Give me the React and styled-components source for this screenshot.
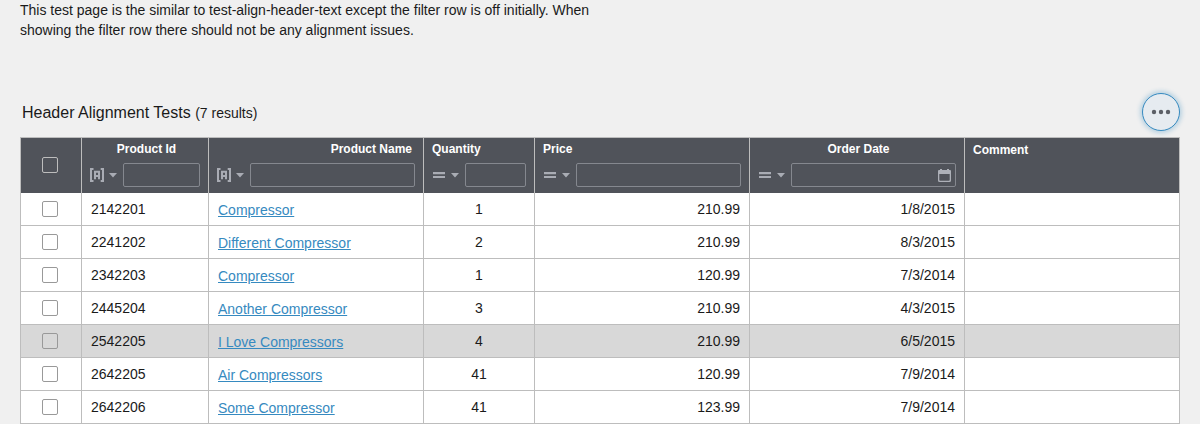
import React from 'react';
import styled, { createGlobalStyle } from 'styled-components';

const GlobalStyle = createGlobalStyle`
  *, *::before, *::after { box-sizing: border-box; }
  body {
    margin: 0;
    background: #f0f0f0;
    color: #1a1a1a;
    font: 14px/20px "Liberation Sans", Arial, sans-serif;
    overflow: hidden;
  }
`;

const Page = styled.main`
  padding: 0 20px;
  height: 424px;
  overflow: hidden;
`;

const Intro = styled.p`
  margin: 0;
  width: 580px;
  height: 93px;
`;

const Toolbar = styled.header`
  display: flex;
  justify-content: space-between;
  align-items: center;
  height: 38px;
  margin-bottom: 6px;
  padding-left: 2px;
`;

const Title = styled.h1`
  margin: 2px 0 0;
  font-size: 16px;
  font-weight: 400;
`;

const Count = styled.span`
  font-size: 14px;
`;

const MoreButton = styled.button`
  display: flex;
  align-items: center;
  justify-content: center;
  width: 38px;
  height: 38px;
  padding: 0;
  border: 1px solid #368ac0;
  border-radius: 50%;
  background: #e6ebf0;
  box-shadow: 0 0 4px 2px rgba(54, 138, 192, 0.3);
`;

const DotsSvg = styled.svg`
  width: 20px;
  height: 6px;
  fill: #5c5f66;
`;

const Grid = styled.div`
  border: solid #bdbdbd;
  border-width: 1px 0 0 1px;
`;

const columns = '61px 127px 215px 111px 215px 215px 215px';

const HeaderRow = styled.div`
  display: grid;
  grid-template-columns: ${columns};
  height: 55px;
  background: #50535a;
`;

const HeaderCell = styled.div`
  display: flex;
  flex-direction: column;
  padding: ${(p) => (p.$plain ? '5px' : '4px')} 8px 0;
  border-right: 1px solid #bdbdbd;
`;

const HeaderCheck = styled(HeaderCell)`
  align-items: center;
  padding: 19px 2px 0 0;
`;

const headerPadding = { left: '0', center: '0 0 0 3px', right: '0 3px 0 0' };

const HeaderText = styled.div`
  height: 14px;
  padding: ${(p) => headerPadding[p.$align]};
  color: #fff;
  font-size: 12px;
  font-weight: 700;
  line-height: 14px;
  text-align: ${(p) => p.$align};
  white-space: nowrap;
`;

const Filter = styled.div`
  display: flex;
  align-items: center;
  height: 24px;
  margin-top: 7px;
`;

const Operator = styled.svg`
  flex: none;
  width: 33px;
  height: 24px;
  color: #a9acb4;
`;

const FilterField = styled.div`
  display: flex;
  align-items: center;
  justify-content: flex-end;
  flex: 1;
  height: 24px;
  padding-right: 4px;
  border: 1px solid #85888f;
  border-radius: 2px;
`;

const CalendarSvg = styled.svg`
  width: 13px;
  height: 13px;
  margin-top: 1px;
  color: #adb0b8;
`;

const Row = styled.div`
  display: grid;
  grid-template-columns: ${columns};
  height: 33px;
  background: ${(p) => (p.$active ? '#d8d8d8' : '#fff')};
`;

const Cell = styled.div`
  height: 33px;
  padding: 0 9px;
  border: solid #bdbdbd;
  border-width: 0 1px 1px 0;
  line-height: 32px;
  text-align: ${(p) => p.$align || 'left'};
  white-space: nowrap;
`;

const CheckCell = styled(Cell)`
  display: flex;
  justify-content: center;
  padding: 8px 2px 0 0;
`;

const Checkbox = styled.span`
  width: 16px;
  height: 16px;
  border: 1px solid ${(p) => (p.$light ? '#bdbdbd' : '#999')};
  border-radius: 2px;
`;

const Link = styled.a`
  display: block;
  color: #368ac0;
  line-height: 34px;
  text-decoration: underline;
`;

const TextOperator = () => (
  <Operator viewBox="0 0 33 24" fill="none">
    <path d="M3.5 6H1v12h2.5M10.7 6H13v12h-2.3" stroke="currentColor" strokeWidth="2" />
    <path d="M5 16.3V8.8h4v7.5M5 13h4" stroke="currentColor" strokeWidth="2" />
    <path d="M19 9.9h8l-4 4.6z" fill="currentColor" />
  </Operator>
);

const EqualsOperator = () => (
  <Operator viewBox="0 0 33 24" fill="currentColor">
    <path d="M1 9h12v2.2H1zM1 12.9h12V15H1zM19 9.9h8l-4 4.6z" />
  </Operator>
);

const Calendar = () => (
  <CalendarSvg viewBox="0 0 13 13" fill="currentColor">
    <path
      fillRule="evenodd"
      d="M2 0h2v1h5V0h2v1h1q1 0 1 1v9.5q0 1.5-1.5 1.5h-10Q0 13 0 11.5V2q0-1 1-1h1zM1.3 5v6q0 .8.8.8h8.8q.8 0 .8-.8V5z"
    />
  </CalendarSvg>
);

const Dots = () => (
  <DotsSvg viewBox="0 0 20 6">
    <circle cx="3" cy="3" r="2.2" />
    <circle cx="10" cy="3" r="2.2" />
    <circle cx="17" cy="3" r="2.2" />
  </DotsSvg>
);

const headers = [
  { label: 'Product Id', align: 'center', operator: 'text' },
  { label: 'Product Name', align: 'right', operator: 'text' },
  { label: 'Quantity', align: 'left', operator: 'equals' },
  { label: 'Price', align: 'left', operator: 'equals' },
  { label: 'Order Date', align: 'center', operator: 'equals', date: true },
  { label: 'Comment', align: 'left' },
];

const products = [
  ['2142201', 'Compressor', '1', '210.99', '1/8/2015'],
  ['2241202', 'Different Compressor', '2', '210.99', '8/3/2015'],
  ['2342203', 'Compressor', '1', '120.99', '7/3/2014'],
  ['2445204', 'Another Compressor', '3', '210.99', '4/3/2015'],
  ['2542205', 'I Love Compressors', '4', '210.99', '6/5/2015'],
  ['2642205', 'Air Compressors', '41', '120.99', '7/9/2014'],
  ['2642206', 'Some Compressor', '41', '123.99', '7/9/2014'],
];

export default function App() {
  return (
    <>
      <GlobalStyle />
      <Page>
        <Intro>
          This test page is the similar to test-align-header-text except the filter row is off
          initially. When showing the filter row there should not be any alignment issues.
        </Intro>
        <Toolbar>
          <Title>
            Header Alignment Tests <Count>(7 results)</Count>
          </Title>
          <MoreButton aria-label="More">
            <Dots />
          </MoreButton>
        </Toolbar>
        <Grid>
          <HeaderRow>
            <HeaderCheck>
              <Checkbox $light />
            </HeaderCheck>
            {headers.map((h) => (
              <HeaderCell key={h.label} $plain={!h.operator}>
                <HeaderText $align={h.align}>{h.label}</HeaderText>
                {h.operator && (
                  <Filter>
                    {h.operator === 'text' ? <TextOperator /> : <EqualsOperator />}
                    <FilterField>{h.date && <Calendar />}</FilterField>
                  </Filter>
                )}
              </HeaderCell>
            ))}
          </HeaderRow>
          {products.map(([id, name, quantity, price, date]) => (
            <Row key={id} $active={id === '2542205'}>
              <CheckCell>
                <Checkbox />
              </CheckCell>
              <Cell>{id}</Cell>
              <Cell>
                <Link>{name}</Link>
              </Cell>
              <Cell $align="center">{quantity}</Cell>
              <Cell $align="right">{price}</Cell>
              <Cell $align="right">{date}</Cell>
              <Cell />
            </Row>
          ))}
        </Grid>
      </Page>
    </>
  );
}
